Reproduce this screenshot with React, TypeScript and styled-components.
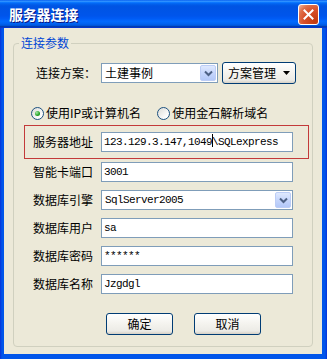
import React from "react";
import styled, { createGlobalStyle } from "styled-components";

const GlobalStyle = createGlobalStyle`
  html, body { margin: 0; padding: 0; background: #ffffff; }
  body {
    font-family: "Noto Sans CJK SC", "Liberation Sans", sans-serif;
    font-size: 12px;
  }
  * { box-sizing: border-box; }
`;

const Window = styled.div`
  width: 327px;
  height: 359px;
  display: flex;
  flex-direction: column;
  background: linear-gradient(to right, #0831d9 0, #0055ea 2px, #0055ea 325px, #0831d9 327px);
`;

const TitleBar = styled.div`
  height: 28px;
  flex: none;
  display: flex;
  align-items: center;
  justify-content: space-between;
  padding: 0 8px 0 9px;
  background: linear-gradient(
    to bottom,
    #0058ee 0%, #3593ff 4%, #288eff 6%, #127dff 8%, #036ffc 10%,
    #0262ee 14%, #0057e5 20%, #0054e3 24%, #0055eb 56%, #005bf5 66%,
    #026afe 76%, #0062ef 86%, #0052d6 92%, #0040ab 94%, #0831d9 100%
  );
`;

const Title = styled.span`
  color: #ffffff;
  font-weight: bold;
  font-size: 14px;
  line-height: 16px;
  letter-spacing: -0.2px;
  text-shadow: 1px 1px 0 #0a1883;
`;

const CloseButton = styled.div`
  width: 21px;
  height: 21px;
  border: 1px solid #ffffff;
  border-radius: 3px;
  display: flex;
  align-items: center;
  justify-content: center;
  background: radial-gradient(circle at 85% 85%, #c03a10 0%, #d8502a 50%, #e0704a 75%, #f4b8a0 100%);
`;

const Body = styled.div`
  flex: 1;
  display: flex;
  flex-direction: column;
  margin: 0 5px 5px 4px;
  padding: 8px 9px 7px 9px;
  background: #ece9d8;
`;

const GroupBox = styled.fieldset`
  flex: 1;
  margin: 0;
  padding: 0 0 11px 0;
  border: 1px solid #d0d0bf;
  border-radius: 4px;
  display: flex;
  flex-direction: column;
  min-width: 0;
`;

const Legend = styled.legend`
  margin-left: 5px;
  padding: 0 2px;
  color: #0046d5;
  font-size: 12px;
  line-height: 14px;
`;

const SchemeRow = styled.div`
  display: flex;
  align-items: center;
  height: 22px;
  margin: 12px 0 0 22px;
`;

const Label = styled.span<{ $width: number }>`
  width: ${(p) => p.$width}px;
  flex: none;
  color: #000000;
  font-size: 12px;
  line-height: 14px;
  white-space: nowrap;
`;

const Combo = styled.div<{ $width: number }>`
  width: ${(p) => p.$width}px;
  height: 20px;
  flex: none;
  display: flex;
  align-items: stretch;
  background: #ffffff;
  border: 1px solid #7f9db9;
`;

const ComboText = styled.span<{ $mono?: boolean }>`
  flex: 1;
  padding-left: 3px;
  color: #000000;
  line-height: 18px;
  white-space: nowrap;
  overflow: hidden;
  font-family: ${(p) =>
    p.$mono ? `"Liberation Mono", "Noto Sans CJK SC", monospace` : `"Noto Sans CJK SC", sans-serif`};
  font-size: ${(p) => (p.$mono ? "11px" : "12px")};
  letter-spacing: ${(p) => (p.$mono ? "-0.6px" : "0")};
`;

const ComboArrow = styled.div`
  width: 16px;
  margin: 1px;
  flex: none;
  display: flex;
  align-items: center;
  justify-content: center;
  border: 1px solid #bccdf6;
  border-radius: 2px;
  background: linear-gradient(to bottom, #dfe9fe 0%, #c6d6fc 50%, #b3c8f8 100%);
`;

const MenuButton = styled.div`
  width: 74px;
  height: 22px;
  margin-left: 4px;
  flex: none;
  display: flex;
  align-items: center;
  padding-left: 5px;
  gap: 7px;
  border: 1px solid #003c74;
  border-radius: 3px;
  background: linear-gradient(to bottom, #ffffff 0%, #f4f3ee 50%, #ecebe6 85%, #d6d0c5 100%);
  color: #000000;
  font-size: 12px;
  line-height: 14px;
`;

const RadioRow = styled.div`
  display: flex;
  align-items: center;
  gap: 16px;
  height: 14px;
  margin: 22px 0 0 17px;
`;

const RadioItem = styled.label`
  display: flex;
  align-items: center;
  gap: 2px;
  color: #000000;
  font-size: 12px;
  line-height: 14px;
  white-space: nowrap;
`;

const RadioCircle = styled.span<{ $checked?: boolean }>`
  width: 13px;
  height: 13px;
  flex: none;
  display: flex;
  align-items: center;
  justify-content: center;
  border: 1px solid #1c5180;
  border-radius: 50%;
  background: linear-gradient(135deg, #dcdcd7 0%, #ffffff 80%);
  &::after {
    content: "";
    width: 5px;
    height: 5px;
    border-radius: 50%;
    display: ${(p) => (p.$checked ? "block" : "none")};
    background: radial-gradient(circle at 35% 35%, #a8e8a8 0%, #21a121 60%, #1a7d1a 100%);
  }
`;

const HighlightBox = styled.div`
  margin: 5px 3px 0 10px;
  padding: 6px 0 6px 8px;
  border: 1px solid #c33a3a;
`;

const FieldList = styled.div`
  display: flex;
  flex-direction: column;
  gap: 8px;
  margin: 3px 0 0 19px;
`;

const FieldRow = styled.div`
  display: flex;
  align-items: center;
`;

const TextBox = styled.div`
  width: 192px;
  height: 20px;
  flex: none;
  padding-left: 2px;
  background: #ffffff;
  border: 1px solid #7f9db9;
  color: #000000;
  font-family: "Liberation Mono", "Noto Sans CJK SC", monospace;
  font-size: 11px;
  letter-spacing: -0.6px;
  line-height: 18px;
  white-space: nowrap;
  overflow: hidden;
`;

const Caret = styled.span`
  display: inline-block;
  width: 1px;
  height: 13px;
  margin-right: -1px;
  vertical-align: -2px;
  background: #000000;
`;

const ButtonRow = styled.div`
  display: flex;
  gap: 21px;
  margin-top: 19px;
  padding-left: 92px;
`;

const PushButton = styled.div`
  width: 67px;
  height: 22px;
  display: flex;
  align-items: center;
  justify-content: center;
  border: 1px solid #003c74;
  border-radius: 3px;
  background: linear-gradient(to bottom, #ffffff 0%, #f4f3ee 50%, #ecebe6 85%, #d6d0c5 100%);
  color: #000000;
  font-size: 12px;
  line-height: 14px;
`;

const Chevron = () => (
  <svg width="9" height="7" viewBox="0 0 9 7">
    <polyline points="1,1.5 4.5,5 8,1.5" fill="none" stroke="#4d6185" strokeWidth="2" />
  </svg>
);

const DownTriangle = () => (
  <svg width="7" height="4" viewBox="0 0 7 4">
    <polygon points="0,0 7,0 3.5,4" fill="#000000" />
  </svg>
);

const CloseIcon = () => (
  <svg width="11" height="11" viewBox="0 0 11 11">
    <path d="M1.5 1.5 L9.5 9.5 M9.5 1.5 L1.5 9.5" stroke="#ffffff" strokeWidth="2" strokeLinecap="square" />
  </svg>
);

const fields = [
  { label: "智能卡端口", value: "3001" },
  { label: "数据库引擎", value: "SqlServer2005", combo: true },
  { label: "数据库用户", value: "sa" },
  { label: "数据库密码", value: "******" },
  { label: "数据库名称", value: "Jzgdgl" },
];

export default function App() {
  return (
    <>
      <GlobalStyle />
      <Window>
        <TitleBar>
          <Title>服务器连接</Title>
          <CloseButton>
            <CloseIcon />
          </CloseButton>
        </TitleBar>
        <Body>
          <GroupBox>
            <Legend>连接参数</Legend>
            <SchemeRow>
              <Label $width={65}>连接方案：</Label>
              <Combo $width={117}>
                <ComboText>土建事例</ComboText>
                <ComboArrow>
                  <Chevron />
                </ComboArrow>
              </Combo>
              <MenuButton>
                方案管理
                <DownTriangle />
              </MenuButton>
            </SchemeRow>

            <RadioRow>
              <RadioItem>
                <RadioCircle $checked />
                使用IP或计算机名
              </RadioItem>
              <RadioItem>
                <RadioCircle />
                使用金石解析域名
              </RadioItem>
            </RadioRow>

            <HighlightBox>
              <FieldRow>
                <Label $width={68}>服务器地址</Label>
                <TextBox>
                  123.129.3.147,1049
                  <Caret />
                  \SQLexpress
                </TextBox>
              </FieldRow>
            </HighlightBox>

            <FieldList>
              {fields.map((f) =>
                f.combo ? (
                  <FieldRow key={f.label}>
                    <Label $width={68}>{f.label}</Label>
                    <Combo $width={192}>
                      <ComboText $mono>{f.value}</ComboText>
                      <ComboArrow>
                        <Chevron />
                      </ComboArrow>
                    </Combo>
                  </FieldRow>
                ) : (
                  <FieldRow key={f.label}>
                    <Label $width={68}>{f.label}</Label>
                    <TextBox>{f.value}</TextBox>
                  </FieldRow>
                )
              )}
            </FieldList>

            <ButtonRow>
              <PushButton>确定</PushButton>
              <PushButton>取消</PushButton>
            </ButtonRow>
          </GroupBox>
        </Body>
      </Window>
    </>
  );
}
